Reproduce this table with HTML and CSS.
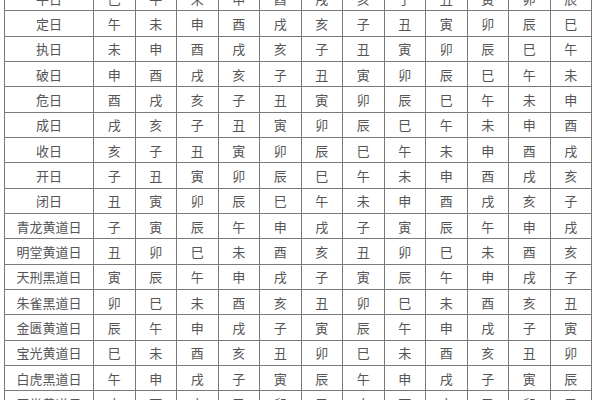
FILE: index.html
```html
<!DOCTYPE html>
<html lang="zh">
<head>
<meta charset="utf-8">
<link rel="stylesheet" href="styles.css">
</head>
<body>
<div class="page">
<div class="grid">
<div class="c h">平日</div><div class="c">巳</div><div class="c">午</div><div class="c">未</div><div class="c">申</div><div class="c">酉</div><div class="c">戌</div><div class="c">亥</div><div class="c">子</div><div class="c">丑</div><div class="c">寅</div><div class="c">卯</div><div class="c">辰</div>
<div class="c h">定日</div><div class="c">午</div><div class="c">未</div><div class="c">申</div><div class="c">酉</div><div class="c">戌</div><div class="c">亥</div><div class="c">子</div><div class="c">丑</div><div class="c">寅</div><div class="c">卯</div><div class="c">辰</div><div class="c">巳</div>
<div class="c h">执日</div><div class="c">未</div><div class="c">申</div><div class="c">酉</div><div class="c">戌</div><div class="c">亥</div><div class="c">子</div><div class="c">丑</div><div class="c">寅</div><div class="c">卯</div><div class="c">辰</div><div class="c">巳</div><div class="c">午</div>
<div class="c h">破日</div><div class="c">申</div><div class="c">酉</div><div class="c">戌</div><div class="c">亥</div><div class="c">子</div><div class="c">丑</div><div class="c">寅</div><div class="c">卯</div><div class="c">辰</div><div class="c">巳</div><div class="c">午</div><div class="c">未</div>
<div class="c h">危日</div><div class="c">酉</div><div class="c">戌</div><div class="c">亥</div><div class="c">子</div><div class="c">丑</div><div class="c">寅</div><div class="c">卯</div><div class="c">辰</div><div class="c">巳</div><div class="c">午</div><div class="c">未</div><div class="c">申</div>
<div class="c h">成日</div><div class="c">戌</div><div class="c">亥</div><div class="c">子</div><div class="c">丑</div><div class="c">寅</div><div class="c">卯</div><div class="c">辰</div><div class="c">巳</div><div class="c">午</div><div class="c">未</div><div class="c">申</div><div class="c">酉</div>
<div class="c h">收日</div><div class="c">亥</div><div class="c">子</div><div class="c">丑</div><div class="c">寅</div><div class="c">卯</div><div class="c">辰</div><div class="c">巳</div><div class="c">午</div><div class="c">未</div><div class="c">申</div><div class="c">酉</div><div class="c">戌</div>
<div class="c h">开日</div><div class="c">子</div><div class="c">丑</div><div class="c">寅</div><div class="c">卯</div><div class="c">辰</div><div class="c">巳</div><div class="c">午</div><div class="c">未</div><div class="c">申</div><div class="c">酉</div><div class="c">戌</div><div class="c">亥</div>
<div class="c h">闭日</div><div class="c">丑</div><div class="c">寅</div><div class="c">卯</div><div class="c">辰</div><div class="c">巳</div><div class="c">午</div><div class="c">未</div><div class="c">申</div><div class="c">酉</div><div class="c">戌</div><div class="c">亥</div><div class="c">子</div>
<div class="c h">青龙黄道日</div><div class="c">子</div><div class="c">寅</div><div class="c">辰</div><div class="c">午</div><div class="c">申</div><div class="c">戌</div><div class="c">子</div><div class="c">寅</div><div class="c">辰</div><div class="c">午</div><div class="c">申</div><div class="c">戌</div>
<div class="c h">明堂黄道日</div><div class="c">丑</div><div class="c">卯</div><div class="c">巳</div><div class="c">未</div><div class="c">酉</div><div class="c">亥</div><div class="c">丑</div><div class="c">卯</div><div class="c">巳</div><div class="c">未</div><div class="c">酉</div><div class="c">亥</div>
<div class="c h">天刑黑道日</div><div class="c">寅</div><div class="c">辰</div><div class="c">午</div><div class="c">申</div><div class="c">戌</div><div class="c">子</div><div class="c">寅</div><div class="c">辰</div><div class="c">午</div><div class="c">申</div><div class="c">戌</div><div class="c">子</div>
<div class="c h">朱雀黑道日</div><div class="c">卯</div><div class="c">巳</div><div class="c">未</div><div class="c">酉</div><div class="c">亥</div><div class="c">丑</div><div class="c">卯</div><div class="c">巳</div><div class="c">未</div><div class="c">酉</div><div class="c">亥</div><div class="c">丑</div>
<div class="c h">金匮黄道日</div><div class="c">辰</div><div class="c">午</div><div class="c">申</div><div class="c">戌</div><div class="c">子</div><div class="c">寅</div><div class="c">辰</div><div class="c">午</div><div class="c">申</div><div class="c">戌</div><div class="c">子</div><div class="c">寅</div>
<div class="c h">宝光黄道日</div><div class="c">巳</div><div class="c">未</div><div class="c">酉</div><div class="c">亥</div><div class="c">丑</div><div class="c">卯</div><div class="c">巳</div><div class="c">未</div><div class="c">酉</div><div class="c">亥</div><div class="c">丑</div><div class="c">卯</div>
<div class="c h">白虎黑道日</div><div class="c">午</div><div class="c">申</div><div class="c">戌</div><div class="c">子</div><div class="c">寅</div><div class="c">辰</div><div class="c">午</div><div class="c">申</div><div class="c">戌</div><div class="c">子</div><div class="c">寅</div><div class="c">辰</div>
<div class="c h">玉堂黄道日</div><div class="c">未</div><div class="c">酉</div><div class="c">亥</div><div class="c">丑</div><div class="c">卯</div><div class="c">巳</div><div class="c">未</div><div class="c">酉</div><div class="c">亥</div><div class="c">丑</div><div class="c">卯</div><div class="c">巳</div>
</div>
</div>
</body>
</html>
```
FILE: styles.css
```css
html, body {
  margin: 0;
  padding: 0;
  background: #ffffff;
}
.page {
  width: 600px;
  height: 400px;
  overflow: hidden;
  padding-left: 4px;
  box-sizing: border-box;
}
.grid {
  margin-top: -15px;
  width: 588px;
  display: grid;
  grid-template-columns: 88px repeat(12, 1fr);
  grid-auto-rows: 24.33px;
  gap: 1px;
  padding: 1px;
  box-sizing: border-box;
  background: #7a7a7a;
}
.c {
  background: #ffffff;
  display: flex;
  align-items: center;
  justify-content: center;
  font-family: "Noto Sans CJK SC", sans-serif;
  font-size: 13px;
  color: #555555;
  line-height: 1;
}
```
